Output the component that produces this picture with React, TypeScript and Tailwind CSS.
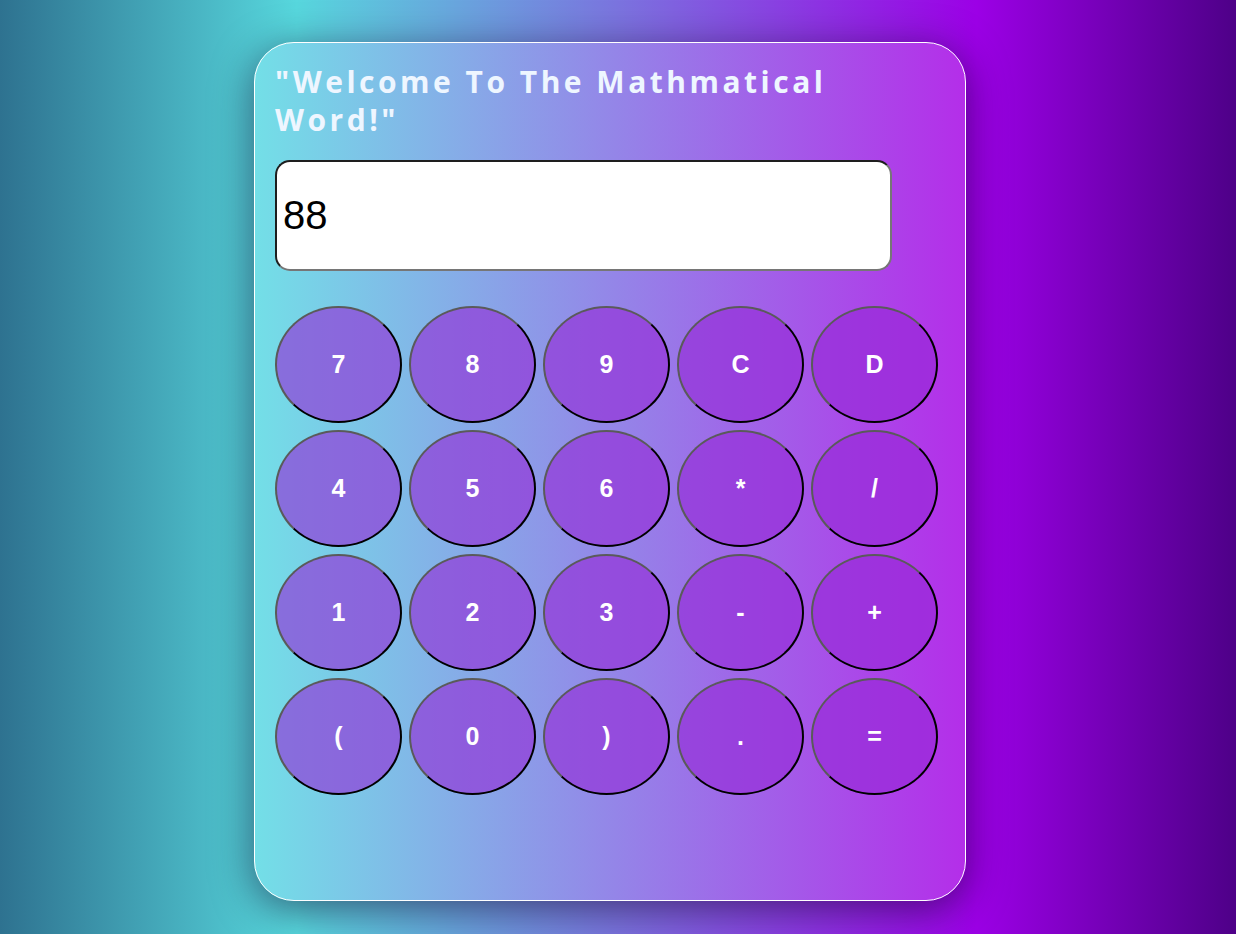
import React, { useState } from 'react';

const keys = ['7', '8', '9', 'C', 'D', '4', '5', '6', '*', '/', '1', '2', '3', '-', '+', '(', '0', ')', '.', '='];

const App: React.FC = () => {
  const [value, setValue] = useState('88');

  const press = (k: string) => {
    if (k === 'C') return setValue('');
    if (k === 'D') return setValue(v => v.slice(0, -1));
    if (k === '=') {
      try {
        // eslint-disable-next-line no-new-func
        setValue(String(Function('return (' + value + ')')()));
      } catch {
        setValue('Error');
      }
      return;
    }
    setValue(v => v + k);
  };

  return (
    <div className="min-h-[934px] w-full bg-[linear-gradient(to_right,#2e7290_0%,#57d7dd_24%,#7b74df_50%,#9c00e6_79%,#4e0088_100%)] pt-[42px] pb-[33px] flex justify-center pr-[16px]">
      <div className="w-[712px] h-[859px] rounded-[40px] border border-white bg-[linear-gradient(to_right,#73dfe7,#b42ee9)] shadow-[0_8px_40px_rgba(20,0,40,0.55)] px-[20px] pt-[20px]">
        <h1 className="w-[600px] text-[30px] leading-[38px] font-bold tracking-[3.5px] text-[#eef6ff] font-['Open_Sans',sans-serif]">
          "Welcome To The Mathmatical Word!"
        </h1>
        <input
          value={value}
          onChange={e => setValue(e.target.value)}
          className="mt-[21px] block w-[617px] h-[111px] rounded-[15px] border-2 border-t-[#1e1e1e] border-l-[#1e1e1e] border-b-[#767676] border-r-[#767676] bg-white px-[6px] text-[40px] text-black font-['Liberation_Sans',Arial,sans-serif] outline-none"
        />
        <div className="mt-[35px] grid grid-cols-[repeat(5,127px)] gap-x-[7px] gap-y-[7px]">
          {keys.map(k => (
            <button
              key={k}
              onClick={() => press(k)}
              className="h-[117px] w-[127px] rounded-[50%] border-2 border-t-[#5a5a5a] border-l-[#5a5a5a] border-b-black border-r-black bg-[rgba(148,38,214,0.6)] text-white text-[25px] font-bold font-['Liberation_Sans',Arial,sans-serif] cursor-pointer"
            >
              {k}
            </button>
          ))}
        </div>
      </div>
    </div>
  );
};

export default App;
